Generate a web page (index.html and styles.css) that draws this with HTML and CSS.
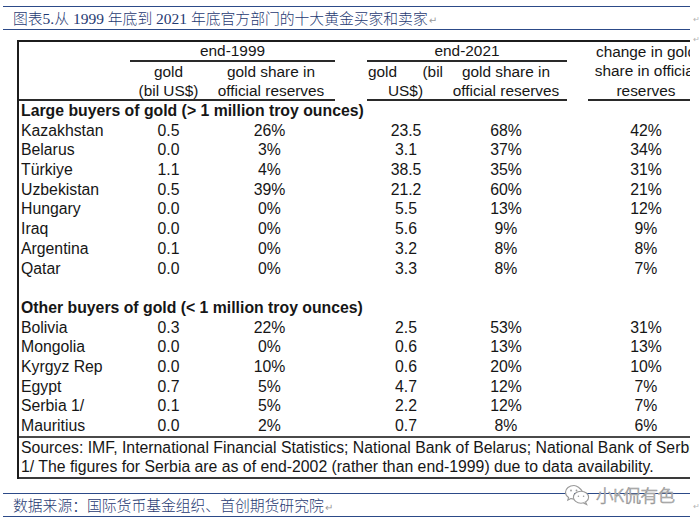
FILE: index.html
```html
<!DOCTYPE html>
<html lang="zh">
<head>
<meta charset="utf-8">
<title>图表5</title>
<link rel="stylesheet" href="styles.css">
</head>
<body>
<div class="page">
  <div class="line-row">
    <div class="title"><span class="cjk">图表</span>5.<span class="cjk">从</span> 1999 <span class="cjk">年底到</span> 2021 <span class="cjk">年底官方部门的十大黄金买家和卖家</span><span class="ret">↵</span></div>
    <span class="edge-mark">↵</span>
  </div>

  <div class="line-row table-row">
    <div class="tbl">
      <div class="hdr">
        <div class="h-top h-99">end-1999</div>
        <div class="h-top h-21">end-2021</div>
        <div class="h-chg">change in gold<br>share in official<br>reserves</div>
        <div class="h-sub h-name"></div>
        <div class="h-sub h-g99">gold<br>(bil US$)</div>
        <div class="h-sub h-s99">gold share in<br>official reserves</div>
        <div class="h-sub h-g21">gold (bil US$)</div>
        <div class="h-sub h-s21">gold share in<br>official reserves</div>
      </div>

      <div class="sec">Large buyers of gold (&gt; 1 million troy ounces)</div>
      <div class="row"><span class="c1">Kazakhstan</span><span class="c2">0.5</span><span class="c3">26%</span><span class="c5">23.5</span><span class="c6">68%</span><span class="c8">42%</span></div>
      <div class="row"><span class="c1">Belarus</span><span class="c2">0.0</span><span class="c3">3%</span><span class="c5">3.1</span><span class="c6">37%</span><span class="c8">34%</span></div>
      <div class="row"><span class="c1">Türkiye</span><span class="c2">1.1</span><span class="c3">4%</span><span class="c5">38.5</span><span class="c6">35%</span><span class="c8">31%</span></div>
      <div class="row"><span class="c1">Uzbekistan</span><span class="c2">0.5</span><span class="c3">39%</span><span class="c5">21.2</span><span class="c6">60%</span><span class="c8">21%</span></div>
      <div class="row"><span class="c1">Hungary</span><span class="c2">0.0</span><span class="c3">0%</span><span class="c5">5.5</span><span class="c6">13%</span><span class="c8">12%</span></div>
      <div class="row"><span class="c1">Iraq</span><span class="c2">0.0</span><span class="c3">0%</span><span class="c5">5.6</span><span class="c6">9%</span><span class="c8">9%</span></div>
      <div class="row"><span class="c1">Argentina</span><span class="c2">0.1</span><span class="c3">0%</span><span class="c5">3.2</span><span class="c6">8%</span><span class="c8">8%</span></div>
      <div class="row"><span class="c1">Qatar</span><span class="c2">0.0</span><span class="c3">0%</span><span class="c5">3.3</span><span class="c6">8%</span><span class="c8">7%</span></div>
      <div class="blank"></div>
      <div class="sec">Other buyers of gold (&lt; 1 million troy ounces)</div>
      <div class="row"><span class="c1">Bolivia</span><span class="c2">0.3</span><span class="c3">22%</span><span class="c5">2.5</span><span class="c6">53%</span><span class="c8">31%</span></div>
      <div class="row"><span class="c1">Mongolia</span><span class="c2">0.0</span><span class="c3">0%</span><span class="c5">0.6</span><span class="c6">13%</span><span class="c8">13%</span></div>
      <div class="row"><span class="c1">Kyrgyz Rep</span><span class="c2">0.0</span><span class="c3">10%</span><span class="c5">0.6</span><span class="c6">20%</span><span class="c8">10%</span></div>
      <div class="row"><span class="c1">Egypt</span><span class="c2">0.7</span><span class="c3">5%</span><span class="c5">4.7</span><span class="c6">12%</span><span class="c8">7%</span></div>
      <div class="row"><span class="c1">Serbia 1/</span><span class="c2">0.1</span><span class="c3">5%</span><span class="c5">2.2</span><span class="c6">12%</span><span class="c8">7%</span></div>
      <div class="row"><span class="c1">Mauritius</span><span class="c2">0.0</span><span class="c3">2%</span><span class="c5">0.7</span><span class="c6">8%</span><span class="c8">6%</span></div>

      <div class="notes">
        <div>Sources: IMF, International Financial Statistics; National Bank of Belarus; National Bank of Serbia.</div>
        <div>1/ The figures for Serbia are as of end-2002 (rather than end-1999) due to data availability.</div>
      </div>
    </div>
    <span class="edge-mark">↵</span>
  </div>

  <div class="line-row footer-row">
    <div class="footer">数据来源：国际货币基金组织、首创期货研究院<span class="ret">↵</span>
      <div class="watermark">
        <svg class="wx" width="26" height="22" viewBox="0 0 26 22">
          <path d="M10 1.5c-4.7 0-8.5 3-8.5 6.8 0 2.1 1.2 4 3.1 5.2l-0.8 2.6 3-1.6c1 0.3 2.1 0.5 3.2 0.5" fill="#fff" stroke="#9a9a9a" stroke-width="1.1"/>
          <path d="M18.4 7.6c-1.9-3.5-5.8-6.1-8.4-6.1" fill="none" stroke="#9a9a9a" stroke-width="1.1"/>
          <ellipse cx="17" cy="13.2" rx="7.6" ry="6" fill="#fff" stroke="#9a9a9a" stroke-width="1.1"/>
          <path d="M21.5 18l1.2 2.6-3.2-1.6" fill="#fff" stroke="#9a9a9a" stroke-width="1.1"/>
          <circle cx="7" cy="6.5" r="0.9" fill="#9a9a9a"/>
          <circle cx="12.5" cy="6.5" r="0.9" fill="#9a9a9a"/>
          <circle cx="14.4" cy="12.2" r="0.8" fill="#9a9a9a"/>
          <circle cx="19.6" cy="12.2" r="0.8" fill="#9a9a9a"/>
        </svg>
        <span class="wm-text">小K侃有色</span>
      </div>
    </div>
    <span class="edge-mark">↵</span>
  </div>
</div>
</body>
</html>
```

FILE: styles.css
```css
body {
  margin: 0;
  background: #ffffff;
}

.page {
  padding-top: 6px;
}

.line-row {
  display: flex;
  align-items: flex-start;
}

.edge-mark {
  margin-left: 3px;
  font-family: "DejaVu Sans", sans-serif;
  font-size: 8px;
  line-height: 10px;
  color: #b5b5b5;
  padding-top: 9px;
}

.title {
  margin-left: 3px;
  width: 690px;
  height: 24px;
  box-sizing: border-box;
  border-top: 1.5px solid #2c4a88;
  border-bottom: 1.5px solid #2c4a88;
  padding-left: 10px;
  font-family: "Liberation Serif", "Noto Sans CJK SC", serif;
  font-size: 15.5px;
  line-height: 21px;
  color: #1f3a72;
  white-space: nowrap;
}

.cjk {
  font-family: "Noto Sans CJK SC", sans-serif;
  font-size: 14.8px;
  font-weight: 300;
}

.ret {
  font-family: "DejaVu Sans", sans-serif;
  font-size: 10px;
  color: #9a9a9a;
  margin-left: 1px;
}

.table-row {
  margin-top: 10px;
}

.table-row .edge-mark {
  padding-top: 0;
  margin-top: -5px;
}

.tbl {
  margin-left: 17px;
  width: 676px;
  box-sizing: border-box;
  border-left: 2px solid #1c1c1c;
  border-top: 2px solid #1c1c1c;
  overflow: hidden;
  font-family: "Liberation Sans", Arial, sans-serif;
  font-size: 15.8px;
  color: #161616;
}

.hdr,
.row {
  display: grid;
  grid-template-columns: 111px 77px 128px 32px 78px 122px 21px 116px;
  width: 685px;
}

.hdr {
  grid-template-rows: 20px 39px;
  font-size: 15.4px;
}

.h-top {
  grid-row: 1;
  text-align: center;
  line-height: 18px;
  border-bottom: 2px solid #2a2a2a;
}

.h-99 {
  grid-column: 2 / 4;
}

.h-21 {
  grid-column: 5 / 7;
}

.h-chg {
  grid-column: 8;
  grid-row: 1 / 3;
  text-align: center;
  line-height: 19.3px;
  border-bottom: 2px solid #2a2a2a;
  white-space: nowrap;
}

.h-sub {
  grid-row: 2;
  text-align: center;
  line-height: 19px;
  border-bottom: 2px solid #2a2a2a;
}

.h-name { grid-column: 1; }
.h-g99 { grid-column: 2; }
.h-s99 { grid-column: 3; white-space: nowrap; }
.h-g21 {
  grid-column: 5;
  text-align: justify;
  text-align-last: center;
  padding-left: 1px;
  padding-right: 2px;
}
.h-s21 { grid-column: 6; white-space: nowrap; }

.sec {
  padding-left: 2px;
  font-weight: bold;
  line-height: 19.7px;
  height: 19.7px;
  white-space: nowrap;
}

.blank {
  height: 19.7px;
}

.row {
  line-height: 19.7px;
  height: 19.7px;
  text-align: center;
}

.c1 {
  grid-column: 1;
  text-align: left;
  padding-left: 2px;
}
.c2 { grid-column: 2; }
.c3 { grid-column: 3; padding-right: 3px; }
.c5 { grid-column: 5; }
.c6 { grid-column: 6; }
.c8 { grid-column: 8; }

.notes {
  border-top: 2px solid #4a4a4a;
  border-bottom: 2px solid #3a3a3a;
  padding-left: 2px;
  line-height: 19.5px;
  white-space: nowrap;
}

.footer-row {
  margin-top: 14px;
}

.footer {
  position: relative;
  margin-left: 3px;
  width: 690px;
  height: 24px;
  box-sizing: border-box;
  border-top: 1.5px solid #2c4a88;
  border-bottom: 1.5px solid #2c4a88;
  padding-left: 10px;
  font-family: "Noto Sans CJK SC", sans-serif;
  font-weight: 300;
  font-size: 14.8px;
  line-height: 21px;
  color: #1f3a72;
  white-space: nowrap;
}

.footer-row .edge-mark {
  padding-top: 9px;
}

.watermark {
  position: absolute;
  left: 561px;
  top: -10px;
  display: flex;
  align-items: center;
  gap: 6px;
}

.wx {
  display: block;
}

.wm-text {
  font-family: "Noto Sans CJK SC", sans-serif;
  font-weight: 300;
  font-size: 17.5px;
  line-height: 20px;
  color: #ffffff;
  -webkit-text-stroke: 0.7px #9a9a9a;
  letter-spacing: -0.5px;
}
```
